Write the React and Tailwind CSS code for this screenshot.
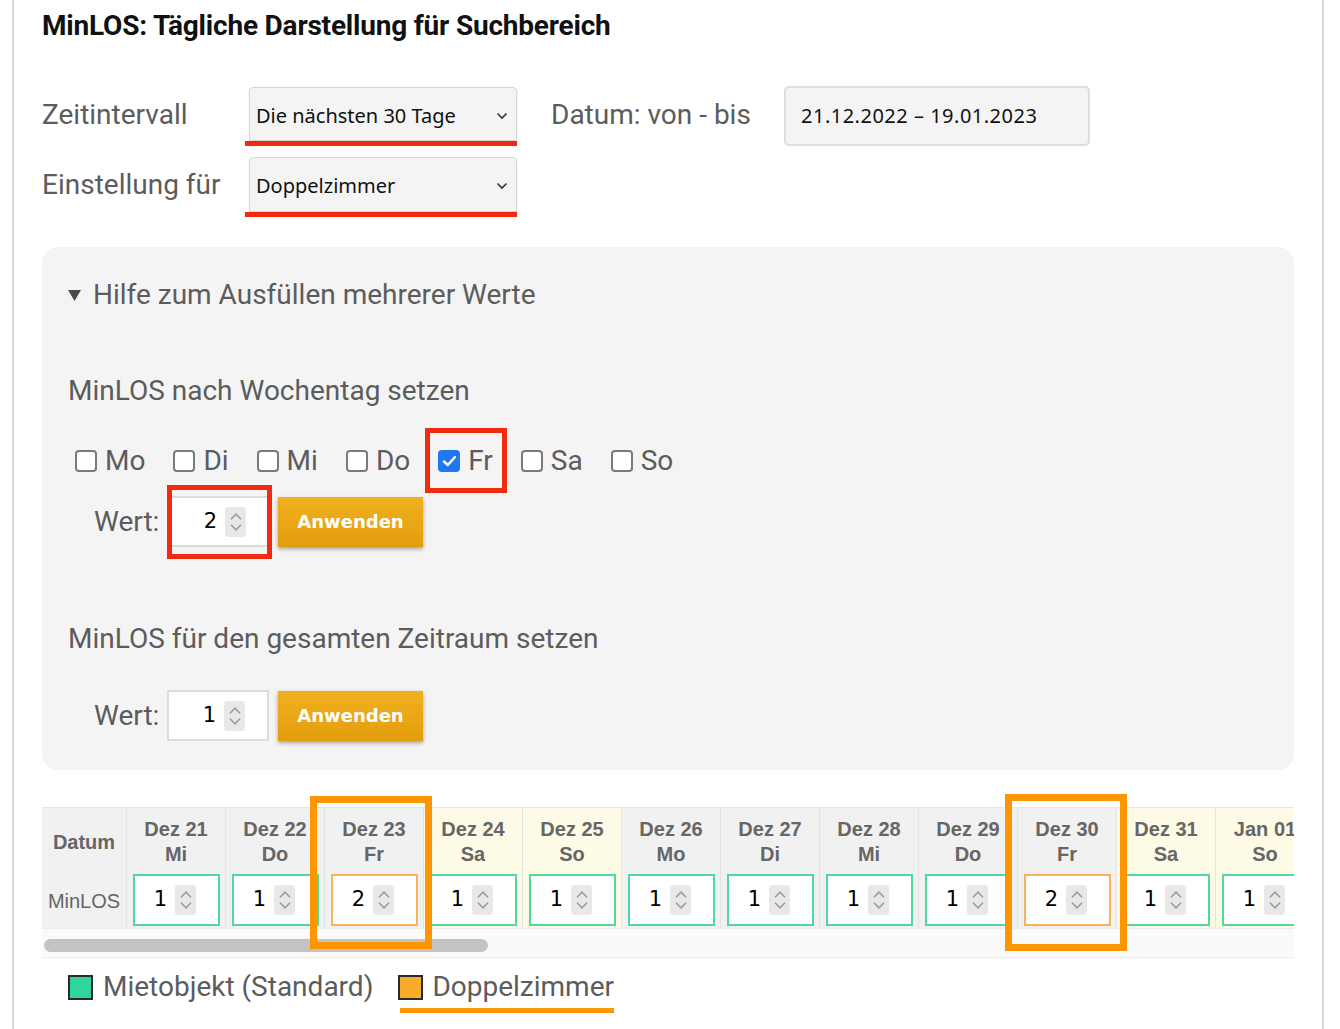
import React from 'react';

const Spinner = () => (
  <div className="w-[21px] h-[30px] bg-[#e8e8e8] rounded-[3px] flex flex-col items-center justify-center gap-[4px]">
    <svg width="12" height="7" viewBox="0 0 12 7"><path d="M1 6.2L6 1.2L11 6.2" stroke="#9c9c9c" strokeWidth="1.6" fill="none" /></svg>
    <svg width="12" height="7" viewBox="0 0 12 7"><path d="M1 0.8L6 5.8L11 0.8" stroke="#9c9c9c" strokeWidth="1.6" fill="none" /></svg>
  </div>
);

const Chevron = () => (
  <svg width="12" height="8" viewBox="0 0 12 8"><path d="M1.5 1.5L6 6L10.5 1.5" stroke="#333" strokeWidth="1.6" fill="none" /></svg>
);

const Box = ({ checked }) =>
  checked ? (
    <span className="w-[22px] h-[22px] rounded-[4px] bg-[#1f78f2] flex items-center justify-center">
      <svg width="15" height="12" viewBox="0 0 15 12"><path d="M2 6.5L5.8 10L13 2" stroke="#fff" strokeWidth="2.4" fill="none" strokeLinecap="round" strokeLinejoin="round" /></svg>
    </span>
  ) : (
    <span className="w-[22px] h-[22px] rounded-[4px] border-2 border-[#7a7a7a] bg-white" />
  );

const days = [
  ['Dez 21', 'Mi', 1, false, false],
  ['Dez 22', 'Do', 1, false, false],
  ['Dez 23', 'Fr', 2, false, true],
  ['Dez 24', 'Sa', 1, true, false],
  ['Dez 25', 'So', 1, true, false],
  ['Dez 26', 'Mo', 1, false, false],
  ['Dez 27', 'Di', 1, false, false],
  ['Dez 28', 'Mi', 1, false, false],
  ['Dez 29', 'Do', 1, false, false],
  ['Dez 30', 'Fr', 2, false, true],
  ['Dez 31', 'Sa', 1, true, false],
  ['Jan 01', 'So', 1, true, false],
];

const weekdays = [
  ['Mo', false],
  ['Di', false],
  ['Mi', false],
  ['Do', false],
  ['Fr', true],
  ['Sa', false],
  ['So', false],
];

const NumInput = ({ value }) => (
  <div className="w-[102px] h-[51px] bg-white border-2 border-[#dcdcdc] flex items-center justify-end pr-[22px] gap-[8px]">
    <span className="font-['DejaVu_Sans',sans-serif] text-[21px] text-black">{value}</span>
    <Spinner />
  </div>
);

const Button = () => (
  <button className="w-[145px] h-[50px] bg-gradient-to-b from-[#f1b11f] to-[#e39d0c] shadow-[0_2px_4px_rgba(0,0,0,0.35)] text-white font-['DejaVu_Sans',sans-serif] font-bold text-[18px]">
    Anwenden
  </button>
);

export default function App() {
  return (
    <div className="w-[1340px] h-[1029px] bg-white overflow-hidden font-['Roboto',sans-serif]">
      <div className="ml-[12px] mr-[16px] h-[1029px] border-x-2 border-[#dadada] px-[28px] pt-[8px]">
        <h1 className="text-[28px] font-bold text-[#111] leading-[36px] tracking-[-0.2px]">
          MinLOS: Tägliche Darstellung für Suchbereich
        </h1>

        <div className="mt-[43px] flex items-start">
          <div className="w-[203px] h-[55px] flex items-center text-[28px] text-[#5c5c5c]">Zeitintervall</div>
          <div className="w-[272px] border-b-[5px] border-[#f22b0f]">
            <div className="ml-[4px] h-[54px] bg-[#f4f4f4] border border-[#d6d6d6] rounded-t-[4px] shadow-[0_1px_2px_rgba(0,0,0,0.08)] flex items-center justify-between pl-[6px] pr-[8px] pt-[3px]">
              <span className="font-['Noto_Sans',sans-serif] text-[20px] text-[#111]">Die nächsten 30 Tage</span>
              <Chevron />
            </div>
          </div>
          <div className="ml-[34px] w-[233px] h-[55px] flex items-center text-[28px] text-[#5c5c5c]">Datum: von - bis</div>
          <div className="w-[306px] h-[60px] -mt-[1px] bg-[#f4f4f4] border-2 border-[#dedede] rounded-[5px] flex items-center pl-[15px]">
            <span className="font-['Noto_Sans',sans-serif] text-[20px] text-[#111] tracking-[0.5px]">21.12.2022 – 19.01.2023</span>
          </div>
        </div>

        <div className="mt-[11px] flex items-start">
          <div className="w-[203px] h-[55px] flex items-center text-[28px] text-[#5c5c5c]">Einstellung für</div>
          <div className="w-[272px] border-b-[5px] border-[#f22b0f]">
            <div className="ml-[4px] h-[55px] bg-[#f4f4f4] border border-[#d6d6d6] rounded-t-[4px] shadow-[0_1px_2px_rgba(0,0,0,0.08)] flex items-center justify-between pl-[6px] pr-[8px] pt-[3px]">
              <span className="font-['Noto_Sans',sans-serif] text-[20px] text-[#111]">Doppelzimmer</span>
              <Chevron />
            </div>
          </div>
        </div>

        <div className="mt-[30px] h-[523px] bg-[#f4f4f4] rounded-[16px] pl-[26px] pt-[28px]">
          <div className="h-[40px] flex items-center text-[28px] text-[#5c5c5c]">
            <svg width="13" height="12" viewBox="0 0 13 12" className="mr-[12px]"><path d="M0 1H13L6.5 12Z" fill="#4a4a4a" /></svg>
            Hilfe zum Ausfüllen mehrerer Werte
          </div>

          <div className="mt-[56px] h-[40px] flex items-center text-[28px] text-[#5c5c5c]">MinLOS nach Wochentag setzen</div>

          <div className="mt-[30px] h-[40px] flex items-center pl-[7px] gap-[28px]">
            {weekdays.map(([d, c]) => (
              <div key={d} className="relative flex items-center gap-[8px] text-[28px] text-[#5c5c5c]">
                <Box checked={c} />
                <span>{d}</span>
                {c && <div className="absolute -left-[13px] -right-[14px] -top-[12px] -bottom-[11px] border-[5px] border-[#f22b0f]" />}
              </div>
            ))}
          </div>

          <div className="mt-[15px] flex items-center pl-[26px]">
            <span className="text-[28px] text-[#5c5c5c] w-[73px]">Wert:</span>
            <div className="relative ml-[1px]">
              <NumInput value={2} />
              <div className="absolute -left-[1px] -right-[2px] -top-[11px] -bottom-[12px] border-[5px] border-[#f22b0f]" />
            </div>
            <div className="ml-[8px]"><Button /></div>
          </div>

          <div className="mt-[72px] h-[40px] flex items-center text-[28px] text-[#5c5c5c]">MinLOS für den gesamten Zeitraum setzen</div>

          <div className="mt-[31px] flex items-center pl-[26px]">
            <span className="text-[28px] text-[#5c5c5c] w-[73px]">Wert:</span>
            <NumInput value={1} />
            <div className="ml-[9px]"><Button /></div>
          </div>
        </div>

        <div className="relative mt-[37px]">
          <div className="w-[1252px] overflow-hidden">
            <div className="flex w-max border-t border-[#e6e6e6] font-['Liberation_Sans',sans-serif]">
              <div className="w-[84px] flex flex-col bg-[#f1f1f1]">
                <div className="h-[65px] pt-[3px] flex items-center justify-center font-bold text-[20px] text-[#666]">Datum</div>
                <div className="h-[55px] flex items-center justify-center text-[20px] text-[#666]">MinLOS</div>
              </div>
              {days.map(([d, w, v, we, hl]) => (
                <div key={d} className={'w-[99px] flex flex-col border-l border-[#e4e4e4] ' + (we ? 'bg-[#fdfbe6]' : 'bg-[#f1f1f1]')}>
                  <div className="h-[62px] pt-[6px] flex flex-col items-center justify-center font-bold text-[20px] leading-[25px] text-[#666]">
                    <span>{d}</span>
                    <span>{w}</span>
                  </div>
                  <div className="h-[58px] flex items-start pt-[4px] pl-[6px]">
                    <div className={'w-[87px] h-[52px] bg-white flex items-center justify-end pr-[22px] gap-[8px] border-2 ' + (hl ? 'border-[#f7b25a]' : 'border-[#4fd8a0]')}>
                      <span className="font-['DejaVu_Sans',sans-serif] text-[21px] text-black">{v}</span>
                      <Spinner />
                    </div>
                  </div>
                </div>
              ))}
            </div>
            <div className="h-[30px] border-y border-[#ececec] bg-[#fafafa] flex items-center px-[2px] pt-[4px]">
              <div className="w-[444px] h-[13px] rounded-full bg-[#c3c3c3]" />
            </div>
          </div>
          <div className="absolute left-[268px] -top-[11px] w-[122px] h-[153px] border-[7px] border-[#ff9500]" />
          <div className="absolute left-[963px] -top-[13px] w-[122px] h-[157px] border-[7px] border-[#ff9500]" />
        </div>

        <div className="mt-[8px] flex items-center pl-[26px] text-[28px] text-[#5c5c5c]">
          <span className="w-[25px] h-[25px] bg-[#2ed69b] border-2 border-[#2a2a2a]" />
          <span className="ml-[10px]">Mietobjekt (Standard)</span>
          <span className="ml-[25px] relative flex items-center">
            <span className="w-[25px] h-[25px] bg-[#fbab2b] border-2 border-[#2a2a2a]" />
            <span className="ml-[9px]">Doppelzimmer</span>
            <span className="absolute left-[2px] right-0 -bottom-[5px] h-[5px] bg-[#ff9500]" />
          </span>
        </div>
      </div>
    </div>
  );
}
